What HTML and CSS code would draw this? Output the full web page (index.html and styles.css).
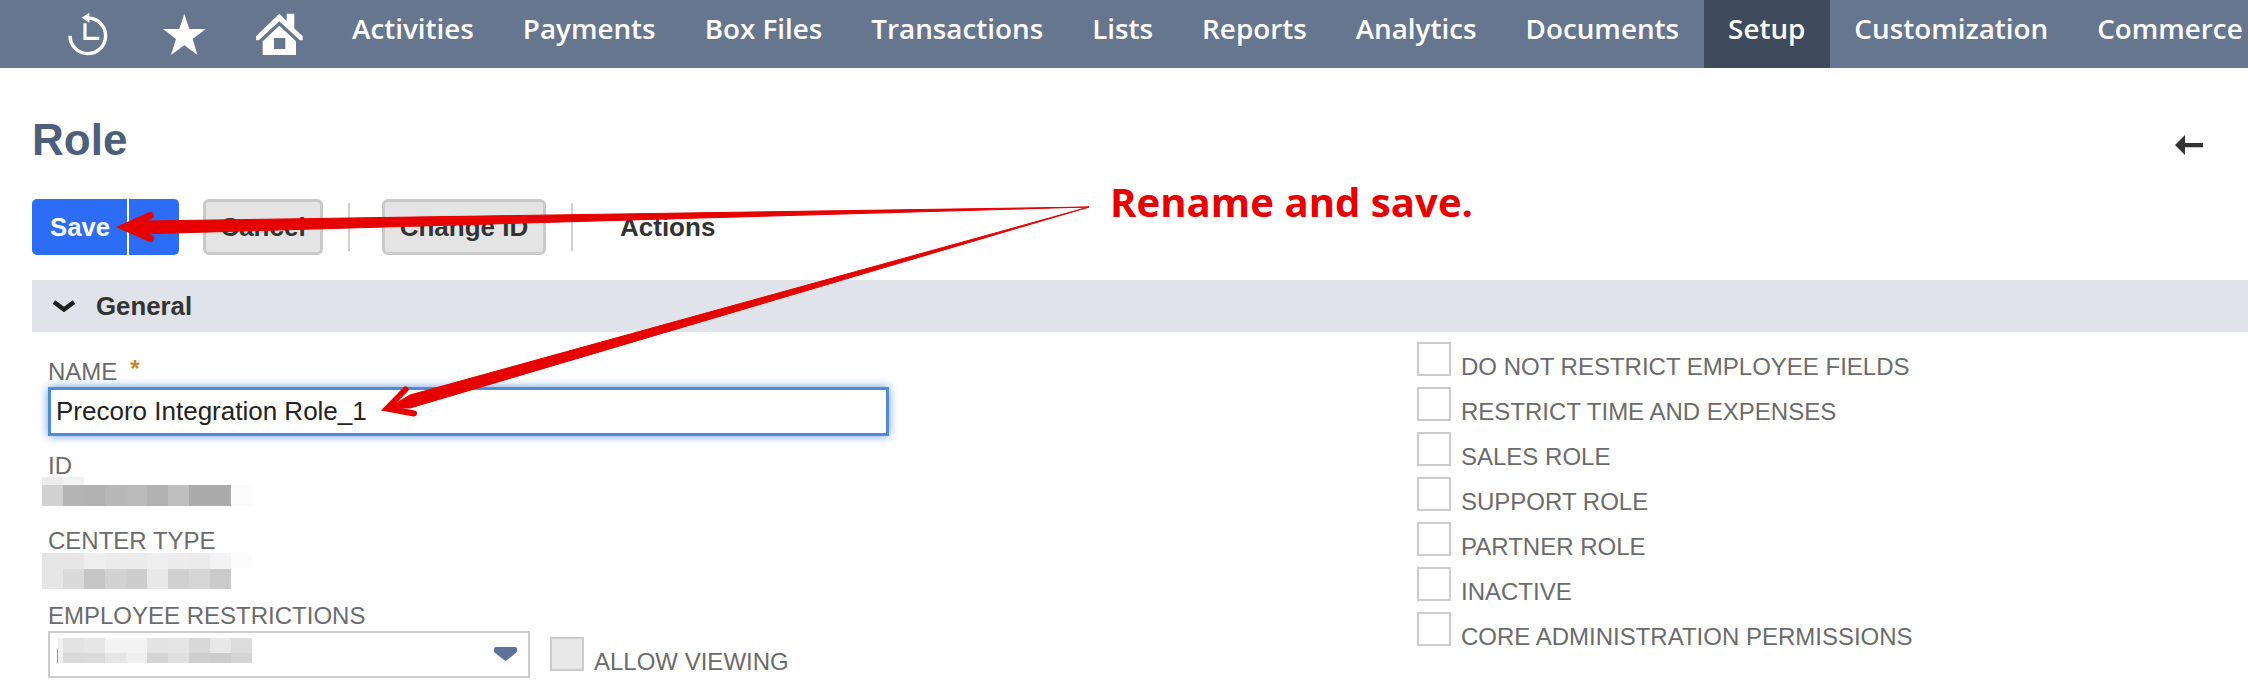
FILE: index.html
```html
<!DOCTYPE html>
<html lang="en">
<head>
<meta charset="utf-8">
<title>Role</title>
<link rel="stylesheet" href="styles.css">
</head>
<body>
<nav class="topnav">
  <svg class="nav-icon icon-history" viewBox="0 0 40 43" aria-hidden="true">
    <path class="line" d="M20 5A17.8 17.8 0 1 1 2 22.8"/>
    <path class="line thin" d="M17 10.3V25.3H31.3"/>
    <path class="fill" d="M13.7 4.7 21.3-.3V9.7Z"/>
  </svg>
  <svg class="nav-icon icon-star" viewBox="0 0 43 41" aria-hidden="true">
    <path class="fill" d="M21.3 0 26.4 15H42.7L29.6 25 34.5 41 21.3 31.3 8 41 13 25 0 15H16.2Z"/>
  </svg>
  <svg class="nav-icon icon-home" viewBox="0 0 47 42" aria-hidden="true">
    <path class="fill" d="M23.3.7 30.7 8V.7H38.3V15.5L46.7 23.3V27.3H44L23.3 8.3 2.7 27.3H0V23.3Z"/>
    <path class="fill" fill-rule="evenodd" d="M23.3 12.7 40 28.3V42H6.7V28.3ZM18 25V36H29.3V25Z"/>
  </svg>
  <a class="nav-item">Activities</a>
  <a class="nav-item">Payments</a>
  <a class="nav-item">Box Files</a>
  <a class="nav-item">Transactions</a>
  <a class="nav-item">Lists</a>
  <a class="nav-item">Reports</a>
  <a class="nav-item">Analytics</a>
  <a class="nav-item">Documents</a>
  <a class="nav-item is-active">Setup</a>
  <a class="nav-item">Customization</a>
  <a class="nav-item">Commerce</a>
</nav>

<main class="page">
  <header class="title-row">
    <h1 class="title">Role</h1>
    <svg class="back-arrow" viewBox="0 0 28 20" aria-hidden="true"><path d="M0 10 10 0V8H28V12.300H10V20Z"/></svg>
  </header>

  <div class="toolbar">
    <button class="btn-save"><span class="btn-save-label">Save</span><span class="btn-save-menu"></span></button>
    <button class="btn btn-cancel">Cancel</button>
    <span class="tool-sep sep-one"></span>
    <button class="btn btn-change">Change ID</button>
    <span class="tool-sep sep-two"></span>
    <span class="tool-actions">Actions</span>
  </div>

  <section class="section-bar">
    <svg class="chevron" viewBox="0 0 24 12" aria-hidden="true"><path d="M2 2 12 9.500 22 2"/></svg>
    <h2 class="section-title">General</h2>
  </section>

  <div class="form-grid">
    <div class="col-left">
      <label class="field-label">NAME<span class="required">*</span></label>
      <input class="text-input" type="text" value="Precoro Integration Role_1">

      <label class="field-label label-id">ID</label>
      <div class="mosaic mosaic-id">
        <div class="row-a"></div>
        <div class="row-b"></div>
      </div>

      <label class="field-label label-center">CENTER TYPE</label>
      <div class="mosaic mosaic-center">
        <div class="row-a"></div>
        <div class="row-b"></div>
      </div>

      <label class="field-label label-employee">EMPLOYEE RESTRICTIONS</label>
      <div class="select-row">
        <div class="select-box">
          <span class="select-caret"></span>
          <div class="mosaic mosaic-select">
            <div class="row-a"></div>
            <div class="row-b"></div>
          </div>
          <svg class="select-arrow" viewBox="0 0 23 14" aria-hidden="true"><path d="M0 1.500Q0 0 2 0H21Q23 0 23 1.500V5L13 13Q11.500 14.500 10 13L0 5Z"/></svg>
        </div>
        <span class="checkbox is-disabled"></span>
        <span class="allow-label">ALLOW VIEWING</span>
      </div>
    </div>

    <div class="col-right">
      <div class="check-row"><span class="checkbox"></span><span class="check-label">DO NOT RESTRICT EMPLOYEE FIELDS</span></div>
      <div class="check-row"><span class="checkbox"></span><span class="check-label">RESTRICT TIME AND EXPENSES</span></div>
      <div class="check-row"><span class="checkbox"></span><span class="check-label">SALES ROLE</span></div>
      <div class="check-row"><span class="checkbox"></span><span class="check-label">SUPPORT ROLE</span></div>
      <div class="check-row"><span class="checkbox"></span><span class="check-label">PARTNER ROLE</span></div>
      <div class="check-row"><span class="checkbox"></span><span class="check-label">INACTIVE</span></div>
      <div class="check-row"><span class="checkbox"></span><span class="check-label">CORE ADMINISTRATION PERMISSIONS</span></div>
    </div>
  </div>
</main>

<svg class="annotation-arrows" viewBox="0 0 2248 694" aria-hidden="true">
  <path class="arrow-head" d="M150.500 215.500 124.500 227 150.500 238.500"/>
  <path class="arrow-shape" d="M122 227 141 221.100 1089 207 141 233.900Z"/>
  <path class="arrow-head arrow-head-thin" d="M405.500 389.500 387 408.500 414 413.500"/>
  <path class="arrow-shape" d="M388 408 410 395 1089 207 410 408Z"/>
</svg>
<p class="annotation-text">Rename and save.</p>
</body>
</html>
```
FILE: styles.css
```css
* { box-sizing: border-box; }

html, body { margin: 0; padding: 0; }

body {
  position: relative;
  width: 2248px;
  height: 694px;
  overflow: hidden;
  background: #fff;
  font-family: "Liberation Sans", Arial, sans-serif;
  color: #333;
}

/* top navigation */
.topnav {
  display: flex;
  align-items: center;
  height: 68px;
  padding-left: 68px;
  background: #67768f;
  overflow: hidden;
}

.nav-icon { flex: none; display: block; overflow: visible; }
.nav-icon .line { fill: none; stroke: #fff; stroke-width: 3.4; }
.nav-icon .line.thin { stroke-width: 3.2; }
.nav-icon .fill { fill: #fff; }
.icon-history { width: 40px; height: 43px; }
.icon-star { width: 43px; height: 41px; margin-left: 55px; }
.icon-home { width: 47px; height: 42px; margin: 0 24.5px 0 50px; }

.nav-item {
  display: flex;
  align-items: center;
  flex: none;
  height: 68px;
  padding: 0 24.5px 12px;
  font-family: "Open Sans", sans-serif;
  font-weight: 600;
  font-size: 27.800px;
  color: #fff;
}

.nav-item.is-active { background: #3f4a5c; }

/* page */
.page { padding-left: 32px; }

.title-row {
  display: flex;
  justify-content: space-between;
  align-items: center;
  height: 72px;
  margin-top: 36px;
  padding-right: 45px;
}

.title {
  margin: 0;
  font-size: 44px;
  line-height: 72px;
  font-weight: 700;
  color: #4d5f7a;
}

.back-arrow { width: 28px; height: 20px; margin-top: 10px; fill: #333; }

/* toolbar */
.toolbar {
  display: flex;
  align-items: center;
  height: 56px;
  margin-top: 23px;
}

.btn-save {
  display: flex;
  width: 147px;
  height: 56px;
  padding: 0;
  border: 0;
  border-radius: 5px;
  background: #2d6cf5;
  overflow: hidden;
}

.btn-save-label {
  width: 97px;
  padding-left: 18px;
  border-right: 2px solid #fff;
  text-align: left;
  font: 700 25.700px/56px "Liberation Sans", Arial, sans-serif;
  color: #fff;
}

.btn {
  height: 56px;
  padding: 0;
  border: 3px solid #c9c9c9;
  border-radius: 6px;
  background: #e4e4e4;
  font: 700 26px/50px "Liberation Sans", Arial, sans-serif;
  color: #333;
}

.btn-cancel { width: 120px; margin-left: 24px; }
.btn-change { width: 164px; }

.tool-sep {
  width: 2px;
  height: 48px;
  background: #d0d0d0;
}

.sep-one { margin: 0 32px 0 25px; }
.sep-two { margin: 0 47px 0 25px; }

.tool-actions {
  font-size: 26px;
  font-weight: 700;
  color: #333;
}

/* section bar */
.section-bar {
  display: flex;
  align-items: center;
  height: 52px;
  margin-top: 25px;
  padding-left: 20px;
  background: #e0e3ea;
}

.chevron {
  width: 24px;
  height: 12px;
  fill: none;
  stroke: #1d1d1d;
  stroke-width: 4.500;
}

.section-title {
  margin: 0 0 0 20px;
  font-size: 25.800px;
  font-weight: 700;
  color: #333;
}

/* form */
.form-grid {
  display: grid;
  grid-template-columns: 1385px 1fr;
}

.col-left { padding: 25px 0 0 16px; }

.field-label {
  display: block;
  height: 26px;
  font-size: 24px;
  line-height: 24px;
  color: #6b6b6b;
}

.required {
  margin-left: 13px;
  vertical-align: 3px;
  color: #c8872a;
  font-weight: 700;
}

.text-input {
  display: block;
  width: 841px;
  height: 49px;
  margin: 4px 0 18px;
  padding: 0 0 0 5px;
  border: 3px solid #4f8bd8;
  border-radius: 0;
  outline: none;
  box-shadow: 0 0 9px rgba(79, 139, 216, 0.85);
  background: #fff;
  font: 26px "Liberation Sans", Arial, sans-serif;
  color: #222;
}

.mosaic { margin-left: -6px; }
.mosaic-id { margin-top: -3px; }
.mosaic-id .row-a {
  height: 8px;
  background: linear-gradient(to right, #ececec 0 21px, #f3f3f3 21px 42px, #fff 42px);
}
.mosaic-id .row-b {
  height: 21px;
  background: linear-gradient(to right, #d2d2d2 0 21px, #b4b4b4 21px 42px, #b2b2b2 42px 63px, #b8b8b8 63px 84px, #bababa 84px 105px, #b2b2b2 105px 126px, #bfbfbf 126px 147px, #ababab 147px 189px, #fbfbfb 189px 210px, #fff 210px);
}

.label-center { margin-top: 23px; }
.mosaic-center { margin-top: -2px; }
.mosaic-center .row-a {
  height: 16px;
  background: linear-gradient(to right, #e6e6e6 0 42px, #eeeeee 42px 63px, #ebebeb 63px 105px, #eeeeee 105px 126px, #ececec 126px 147px, #ebebeb 147px 168px, #f3f3f3 168px 189px, #fbfbfb 189px 210px, #fff 210px);
}
.mosaic-center .row-b {
  height: 20px;
  background: linear-gradient(to right, #e6e6e6 0 21px, #dadada 21px 42px, #c6c6c6 42px 63px, #d2d2d2 63px 84px, #cdcdcd 84px 105px, #e8e8e8 105px 126px, #d0d0d0 126px 147px, #d6d6d6 147px 168px, #cbcbcb 168px 189px, #fff 189px);
}

.label-employee { margin-top: 15px; }

.select-row {
  display: flex;
  align-items: flex-start;
  margin-top: 1px;
}

.select-box {
  display: flex;
  align-items: flex-start;
  width: 482px;
  height: 47px;
  padding: 5px 11px 0 7px;
  border: 2px solid #ccc;
}

.select-caret {
  flex: none;
  width: 1px;
  height: 14px;
  margin-top: 11px;
  background: #999;
}

.mosaic-select { width: 194px; margin: 0 auto 0 0; }
.mosaic-select .row-a {
  height: 15px;
  background: linear-gradient(to right, #f0f0f0 0 5px, #e3e3e3 5px 26px, #e6e6e6 26px 47px, #f3f3f3 47px 89px, #e3e3e3 89px 110px, #e5e5e5 110px 131px, #d8d8d8 131px 152px, #e8e8e8 152px 173px, #dcdcdc 173px 194px);
}
.mosaic-select .row-b {
  height: 10px;
  background: linear-gradient(to right, #f0f0f0 0 5px, #d9d9d9 5px 26px, #dadada 26px 47px, #e6e6e6 47px 68px, #eeeeee 68px 89px, #d5d5d5 89px 110px, #dfdfdf 110px 131px, #cecece 131px 152px, #cccccc 152px 173px, #d5d5d5 173px 194px);
}

.select-arrow {
  flex: none;
  width: 23px;
  height: 14px;
  margin-top: 9px;
  fill: #5d7299;
}

.checkbox {
  display: block;
  flex: none;
  width: 34px;
  height: 34px;
  border: 2px solid #ccc;
  background: #fff;
}

.checkbox.is-disabled {
  margin: 6px 0 0 20px;
  background: #e8e8e8;
}

.allow-label {
  margin: 18px 0 0 10px;
  font-size: 24px;
  line-height: 26px;
  color: #6b6b6b;
}

.col-right { padding-top: 10px; }

.check-row {
  display: flex;
  align-items: flex-start;
  height: 45px;
}

.check-label {
  margin: 12px 0 0 10px;
  font-size: 24px;
  line-height: 26px;
  color: #6b6b6b;
}

/* annotation overlay */
.annotation-arrows {
  position: absolute;
  top: 0;
  left: 0;
  width: 2248px;
  height: 694px;
  pointer-events: none;
}

.arrow-shape {
  fill: #e60000;
  stroke: #e60000;
  stroke-width: 1;
  stroke-linejoin: round;
}

.arrow-head {
  fill: none;
  stroke: #e60000;
  stroke-width: 7;
  stroke-linecap: round;
  stroke-linejoin: miter;
}

.arrow-head-thin { stroke-width: 6; }

.annotation-text {
  position: absolute;
  top: 175px;
  left: 1110px;
  margin: 0;
  font-family: "Open Sans", sans-serif;
  font-weight: 700;
  font-size: 40.150px;
  line-height: 54px;
  color: #e60000;
  white-space: nowrap;
}
```
